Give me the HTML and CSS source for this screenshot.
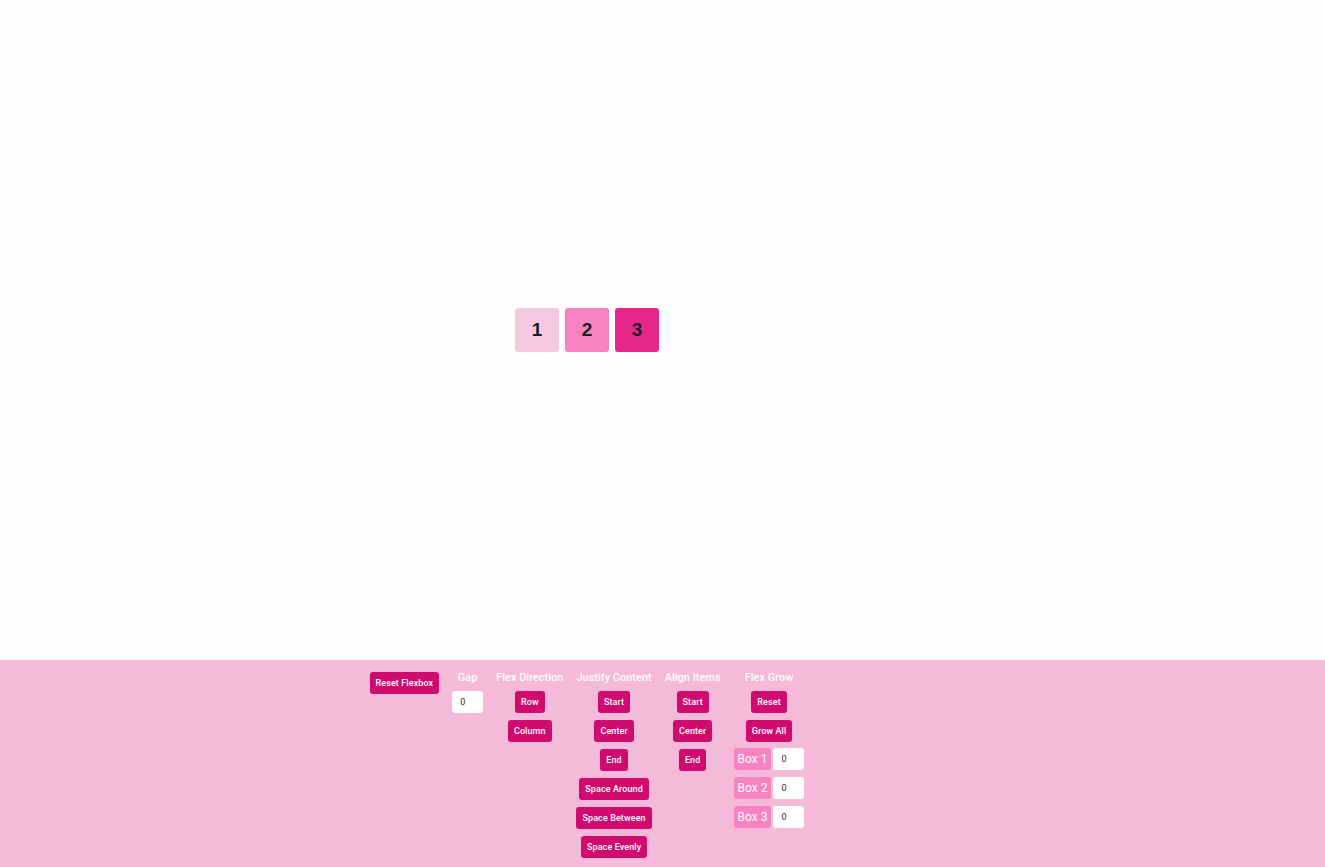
FILE: index.html
```html
<!DOCTYPE html>
<html lang="en">
<head>
<meta charset="utf-8">
<title>Flexbox Playground</title>
<link rel="stylesheet" href="styles.css">
</head>
<body>
<main class="stage">
  <div class="stage-inner">
    <div class="flex-container">
      <div class="box box-1">1</div>
      <div class="box box-2">2</div>
      <div class="box box-3">3</div>
    </div>
  </div>
</main>
<section class="panel">
  <div class="panel-inner">
    <div class="col">
      <button class="btn">Reset Flexbox</button>
    </div>
    <div class="col">
      <div class="label">Gap</div>
      <input class="num" type="text" value="0">
    </div>
    <div class="col">
      <div class="label">Flex Direction</div>
      <button class="btn">Row</button>
      <button class="btn">Column</button>
    </div>
    <div class="col">
      <div class="label">Justify Content</div>
      <button class="btn">Start</button>
      <button class="btn">Center</button>
      <button class="btn">End</button>
      <button class="btn">Space Around</button>
      <button class="btn">Space Between</button>
      <button class="btn">Space Evenly</button>
    </div>
    <div class="col">
      <div class="label">Align Items</div>
      <button class="btn">Start</button>
      <button class="btn">Center</button>
      <button class="btn">End</button>
    </div>
    <div class="col col-grow">
      <div class="label">Flex Grow</div>
      <button class="btn">Reset</button>
      <button class="btn">Grow All</button>
      <div class="grow-list">
        <div class="grow-row"><span class="tag">Box 1</span><input class="num" type="text" value="0"></div>
        <div class="grow-row"><span class="tag">Box 2</span><input class="num" type="text" value="0"></div>
        <div class="grow-row"><span class="tag">Box 3</span><input class="num" type="text" value="0"></div>
      </div>
    </div>
  </div>
</section>
</body>
</html>
```
FILE: styles.css
```css
* { box-sizing: border-box; }
html, body { margin: 0; padding: 0; }
body {
  font-family: Roboto, "Liberation Sans", sans-serif;
  background: #fefefe;
  height: 867px;
  overflow: hidden;
}
.stage {
  height: 660px;
  display: flex;
}
.stage-inner {
  width: 1174px;
  display: flex;
  justify-content: center;
  align-items: center;
}
.flex-container {
  display: flex;
  gap: 6px;
}
.box {
  width: 44px;
  height: 44px;
  border-radius: 3px;
  display: flex;
  align-items: center;
  justify-content: center;
  font-family: "Liberation Sans", Arial, sans-serif;
  font-weight: 700;
  font-size: 19px;
  color: #1b1a2a;
}
.box-1 { background: #f7c8e1; }
.box-2 { background: #f683bf; }
.box-3 { background: #e5268b; }
.panel {
  background: #f5b9d9;
  height: 207px;
  padding-top: 12px;
}
.panel-inner {
  width: 1174px;
  display: flex;
  justify-content: center;
  align-items: flex-start;
  gap: 13px;
}
.col {
  display: flex;
  flex-direction: column;
  align-items: center;
  gap: 7px;
}
.label {
  color: #ffffff;
  font-size: 11px;
  font-weight: 500;
  line-height: 12px;
  height: 12px;
  white-space: nowrap;
}
.btn {
  background: #d00a6f;
  color: #ffffff;
  border: none;
  border-radius: 3px;
  height: 22px;
  padding: 0 6px;
  font-family: Roboto, "Liberation Sans", sans-serif;
  font-size: 9px;
  font-weight: 500;
  letter-spacing: 0.1px;
  white-space: nowrap;
  cursor: pointer;
}
.num {
  width: 31px;
  height: 22px;
  border: none;
  border-radius: 3px;
  background: #ffffff;
  padding: 0 0 0 8px;
  font-family: Roboto, "Liberation Sans", sans-serif;
  font-size: 9px;
  color: #2b2b3b;
  outline: none;
}
.grow-list {
  display: flex;
  flex-direction: column;
  gap: 7px;
  margin-top: -1px;
}
.grow-row {
  display: flex;
  gap: 2px;
  align-items: center;
}
.tag {
  background: #f783c0;
  color: #ffffff;
  border-radius: 3px;
  height: 22px;
  padding: 0 4px;
  display: flex;
  align-items: center;
  font-size: 12px;
  white-space: nowrap;
}
```
